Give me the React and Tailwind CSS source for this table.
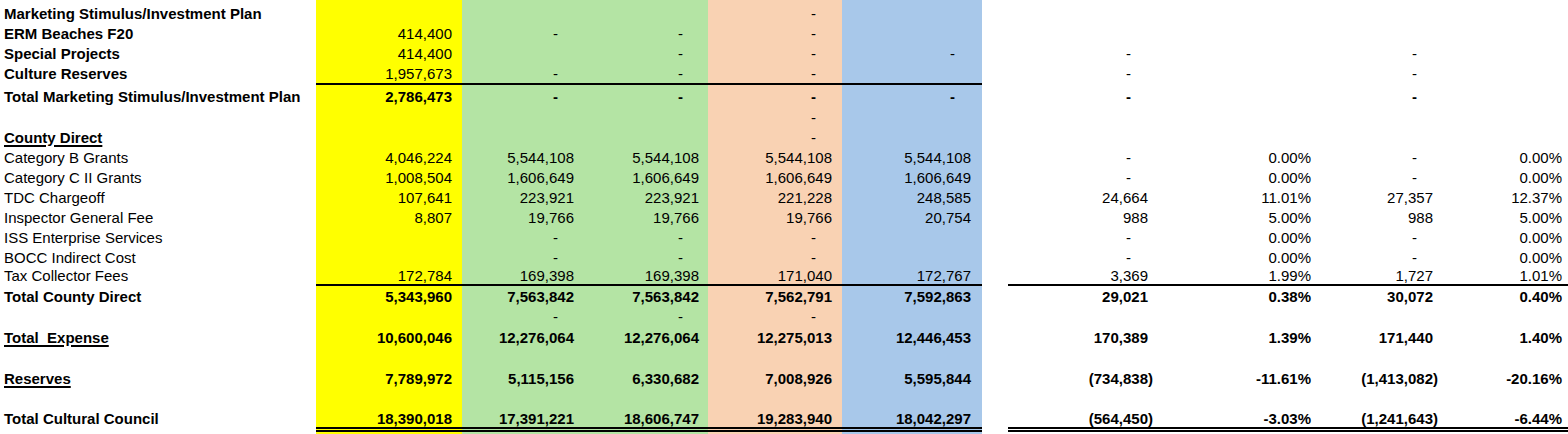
const COLS = [
  { w: "w-[146px]", bg: "bg-[#ffff00]", pr: "pr-[10px]", dash: "pr-[26px]", neg: "pr-[5px]" },
  { w: "w-[122px]", bg: "bg-[#b4e4a4]", pr: "pr-[10px]", dash: "pr-[26px]", neg: "pr-[5px]" },
  { w: "w-[124px]", bg: "bg-[#b4e4a4]", pr: "pr-[9px]", dash: "pr-[25px]", neg: "pr-[5px]" },
  { w: "w-[134px]", bg: "bg-[#f9d2b3]", pr: "pr-[10px]", dash: "pr-[26px]", neg: "pr-[5px]" },
  { w: "w-[140px]", bg: "bg-[#a8c8ea]", pr: "pr-[11px]", dash: "pr-[27px]", neg: "pr-[5px]" },
  { w: "w-[150px]", bg: "bg-white", pr: "pr-[10px]", dash: "pr-[27px]", neg: "pr-[5px]" },
  { w: "w-[163px]", bg: "bg-white", pr: "pr-[10px]", dash: "pr-[26px]", neg: "pr-[10px]" },
  { w: "w-[122px]", bg: "bg-white", pr: "pr-[10px]", dash: "pr-[26px]", neg: "pr-[5px]" },
  { w: "w-[125px]", bg: "bg-white", pr: "pr-[6px]", dash: "pr-[22px]", neg: "pr-[6px]" },
];

const E = [null, null, null, null, null, null, null, null, null];

// line: "left" = under the coloured block only, "both" = also under the variance block
const ROWS = [
  { h: "h-[3px]", v: E },
  { label: "Marketing Stimulus/Investment Plan", bold: true, h: "h-[20px]", v: [null, null, null, "-", null, null, null, null, null] },
  { label: "ERM Beaches F20", bold: true, h: "h-[20px]", v: ["414,400", "-", "-", "-", null, null, null, null, null] },
  { label: "Special Projects", bold: true, h: "h-[20px]", v: ["414,400", null, "-", "-", "-", "-", null, "-", null] },
  { label: "Culture Reserves", bold: true, h: "h-[22px]", line: "left", v: ["1,957,673", "-", "-", "-", null, "-", null, "-", null] },
  { label: "Total Marketing Stimulus/Investment Plan", bold: true, vb: true, h: "h-[22px]", v: ["2,786,473", "-", "-", "-", "-", "-", null, "-", null] },
  { h: "h-[20px]", v: [null, null, null, "-", null, null, null, null, null] },
  { label: "County Direct", bold: true, under: true, h: "h-[20px]", v: [null, null, null, "-", null, null, null, null, null] },
  { label: "Category B Grants", h: "h-[20px]", v: ["4,046,224", "5,544,108", "5,544,108", "5,544,108", "5,544,108", "-", "0.00%", "-", "0.00%"] },
  { label: "Category C II Grants", h: "h-[20px]", v: ["1,008,504", "1,606,649", "1,606,649", "1,606,649", "1,606,649", "-", "0.00%", "-", "0.00%"] },
  { label: "TDC Chargeoff", h: "h-[20px]", v: ["107,641", "223,921", "223,921", "221,228", "248,585", "24,664", "11.01%", "27,357", "12.37%"] },
  { label: "Inspector General Fee", h: "h-[20px]", v: ["8,807", "19,766", "19,766", "19,766", "20,754", "988", "5.00%", "988", "5.00%"] },
  { label: "ISS Enterprise Services", h: "h-[20px]", v: [null, "-", "-", "-", null, "-", "0.00%", "-", "0.00%"] },
  { label: "BOCC Indirect Cost", h: "h-[20px]", v: [null, "-", "-", "-", null, "-", "0.00%", "-", "0.00%"] },
  { label: "Tax Collector Fees", h: "h-[19px]", line: "both", v: ["172,784", "169,398", "169,398", "171,040", "172,767", "3,369", "1.99%", "1,727", "1.01%"] },
  { label: "Total County Direct", bold: true, vb: true, h: "h-[20px]", v: ["5,343,960", "7,563,842", "7,563,842", "7,562,791", "7,592,863", "29,021", "0.38%", "30,072", "0.40%"] },
  { h: "h-[21px]", v: [null, "-", "-", "-", null, null, null, null, null] },
  { label: "Total  Expense", bold: true, under: true, vb: true, h: "h-[20px]", v: ["10,600,046", "12,276,064", "12,276,064", "12,275,013", "12,446,453", "170,389", "1.39%", "171,440", "1.40%"] },
  { h: "h-[21px]", v: E },
  { label: "Reserves", bold: true, under: true, vb: true, h: "h-[21px]", v: ["7,789,972", "5,115,156", "6,330,682", "7,008,926", "5,595,844", "(734,838)", "-11.61%", "(1,413,082)", "-20.16%"] },
  { h: "h-[20px]", v: E },
  { label: "Total Cultural Council", bold: true, vb: true, h: "h-[23px]", line: "double", v: ["18,390,018", "17,391,221", "18,606,747", "19,283,940", "18,042,297", "(564,450)", "-3.03%", "(1,241,643)", "-6.44%"] },
  { h: "h-[2px]", v: E },
];

function borderFor(line, i) {
  if (!line) return "";
  const inLeft = i < 5;
  if (line === "double") return "border-b-[5px] border-double border-black";
  if (line === "left") return inLeft ? "border-b-2 border-black" : "border-b-2 border-transparent";
  return "border-b-2 border-black";
}

function pad(line) {
  if (!line) return "";
  if (line === "double") return "border-b-[5px] border-transparent";
  return "border-b-2 border-transparent";
}

function Row({ row }) {
  return (
    <div className={`flex ${row.h}`}>
      <div
        className={`w-[316px] pl-[4px] flex items-center whitespace-pre ${pad(row.line)} ${
          row.bold ? "font-bold" : ""
        }`}
      >
        {row.label && (
          <span className={row.under ? "underline decoration-[2px] underline-offset-[2px]" : ""}>
            {row.label}
          </span>
        )}
      </div>
      {row.v.map((val, i) => {
        const col = COLS[i];
        const p = val === "-" ? col.dash : val && val.startsWith("(") ? col.neg : col.pr;
        const cell = (
          <div
            key={i}
            className={`${col.w} ${col.bg} ${p} ${borderFor(row.line, i)} flex items-center justify-end ${
              row.vb ? "font-bold" : ""
            }`}
          >
            {val}
          </div>
        );
        if (i === 5) {
          return [
            <div key="gap" className={`w-[26px] ${pad(row.line)}`} />,
            cell,
          ];
        }
        return cell;
      })}
    </div>
  );
}

export default function App() {
  return (
    <div className="w-[1568px] h-[434px] overflow-hidden bg-white text-black text-[15px] leading-none font-['Liberation_Sans',Arial,sans-serif]">
      {ROWS.map((row, i) => (
        <Row key={i} row={row} />
      ))}
    </div>
  );
}
